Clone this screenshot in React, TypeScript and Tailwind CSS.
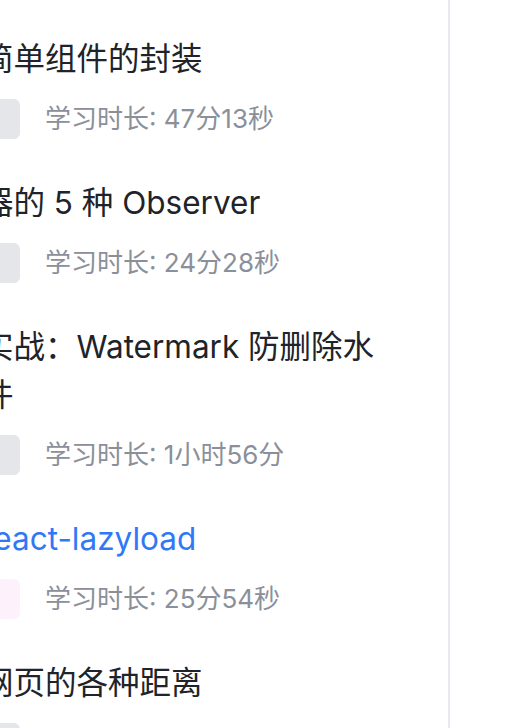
import React from 'react'

type Lesson = {
  title: string
  duration: string
  active?: boolean
}

const LESSONS: Lesson[] = [
  { title: '简单组件的封装', duration: '47分13秒' },
  { title: '器的 5 种 Observer', duration: '24分28秒' },
  { title: '实战：Watermark 防删除水件', duration: '1小时56分' },
  { title: 'react-lazyload', duration: '25分54秒', active: true },
  { title: '网页的各种距离', duration: '32分07秒' },
]

export default function App() {
  return (
    <div
      className="flex h-[728px] w-[532px] overflow-hidden bg-white"
      style={{ fontFamily: 'Inter, "Noto Sans CJK SC", sans-serif' }}
    >
      {/* lesson list, cut off on the left like the original viewport */}
      <div className="w-[448px] shrink-0 overflow-hidden">
        <ul className="-ml-[18px] w-[400px] pt-[35px]">
          {LESSONS.map((l) => (
            <li key={l.title} className="pb-[40px]">
              <h3
                className={`text-[31.5px] leading-[48px] ${
                  l.active ? 'text-[#3178f6]' : 'text-[#202329]'
                }`}
              >
                {l.title}
              </h3>
              <div className="mt-[16px] flex items-center gap-[25px]">
                <div
                  className={`h-10 w-[38px] shrink-0 rounded-md ${
                    l.active ? 'bg-[#fdf1fb]' : 'bg-[#e5e6ea]'
                  }`}
                />
                <span className="text-[26px] leading-10 text-[#8a8f99]">
                  学习时长: {l.duration}
                </span>
              </div>
            </li>
          ))}
        </ul>
      </div>
      <div className="w-[2px] shrink-0 bg-[#e8e8ee]" />
      <div className="flex-1" />
    </div>
  )
}
